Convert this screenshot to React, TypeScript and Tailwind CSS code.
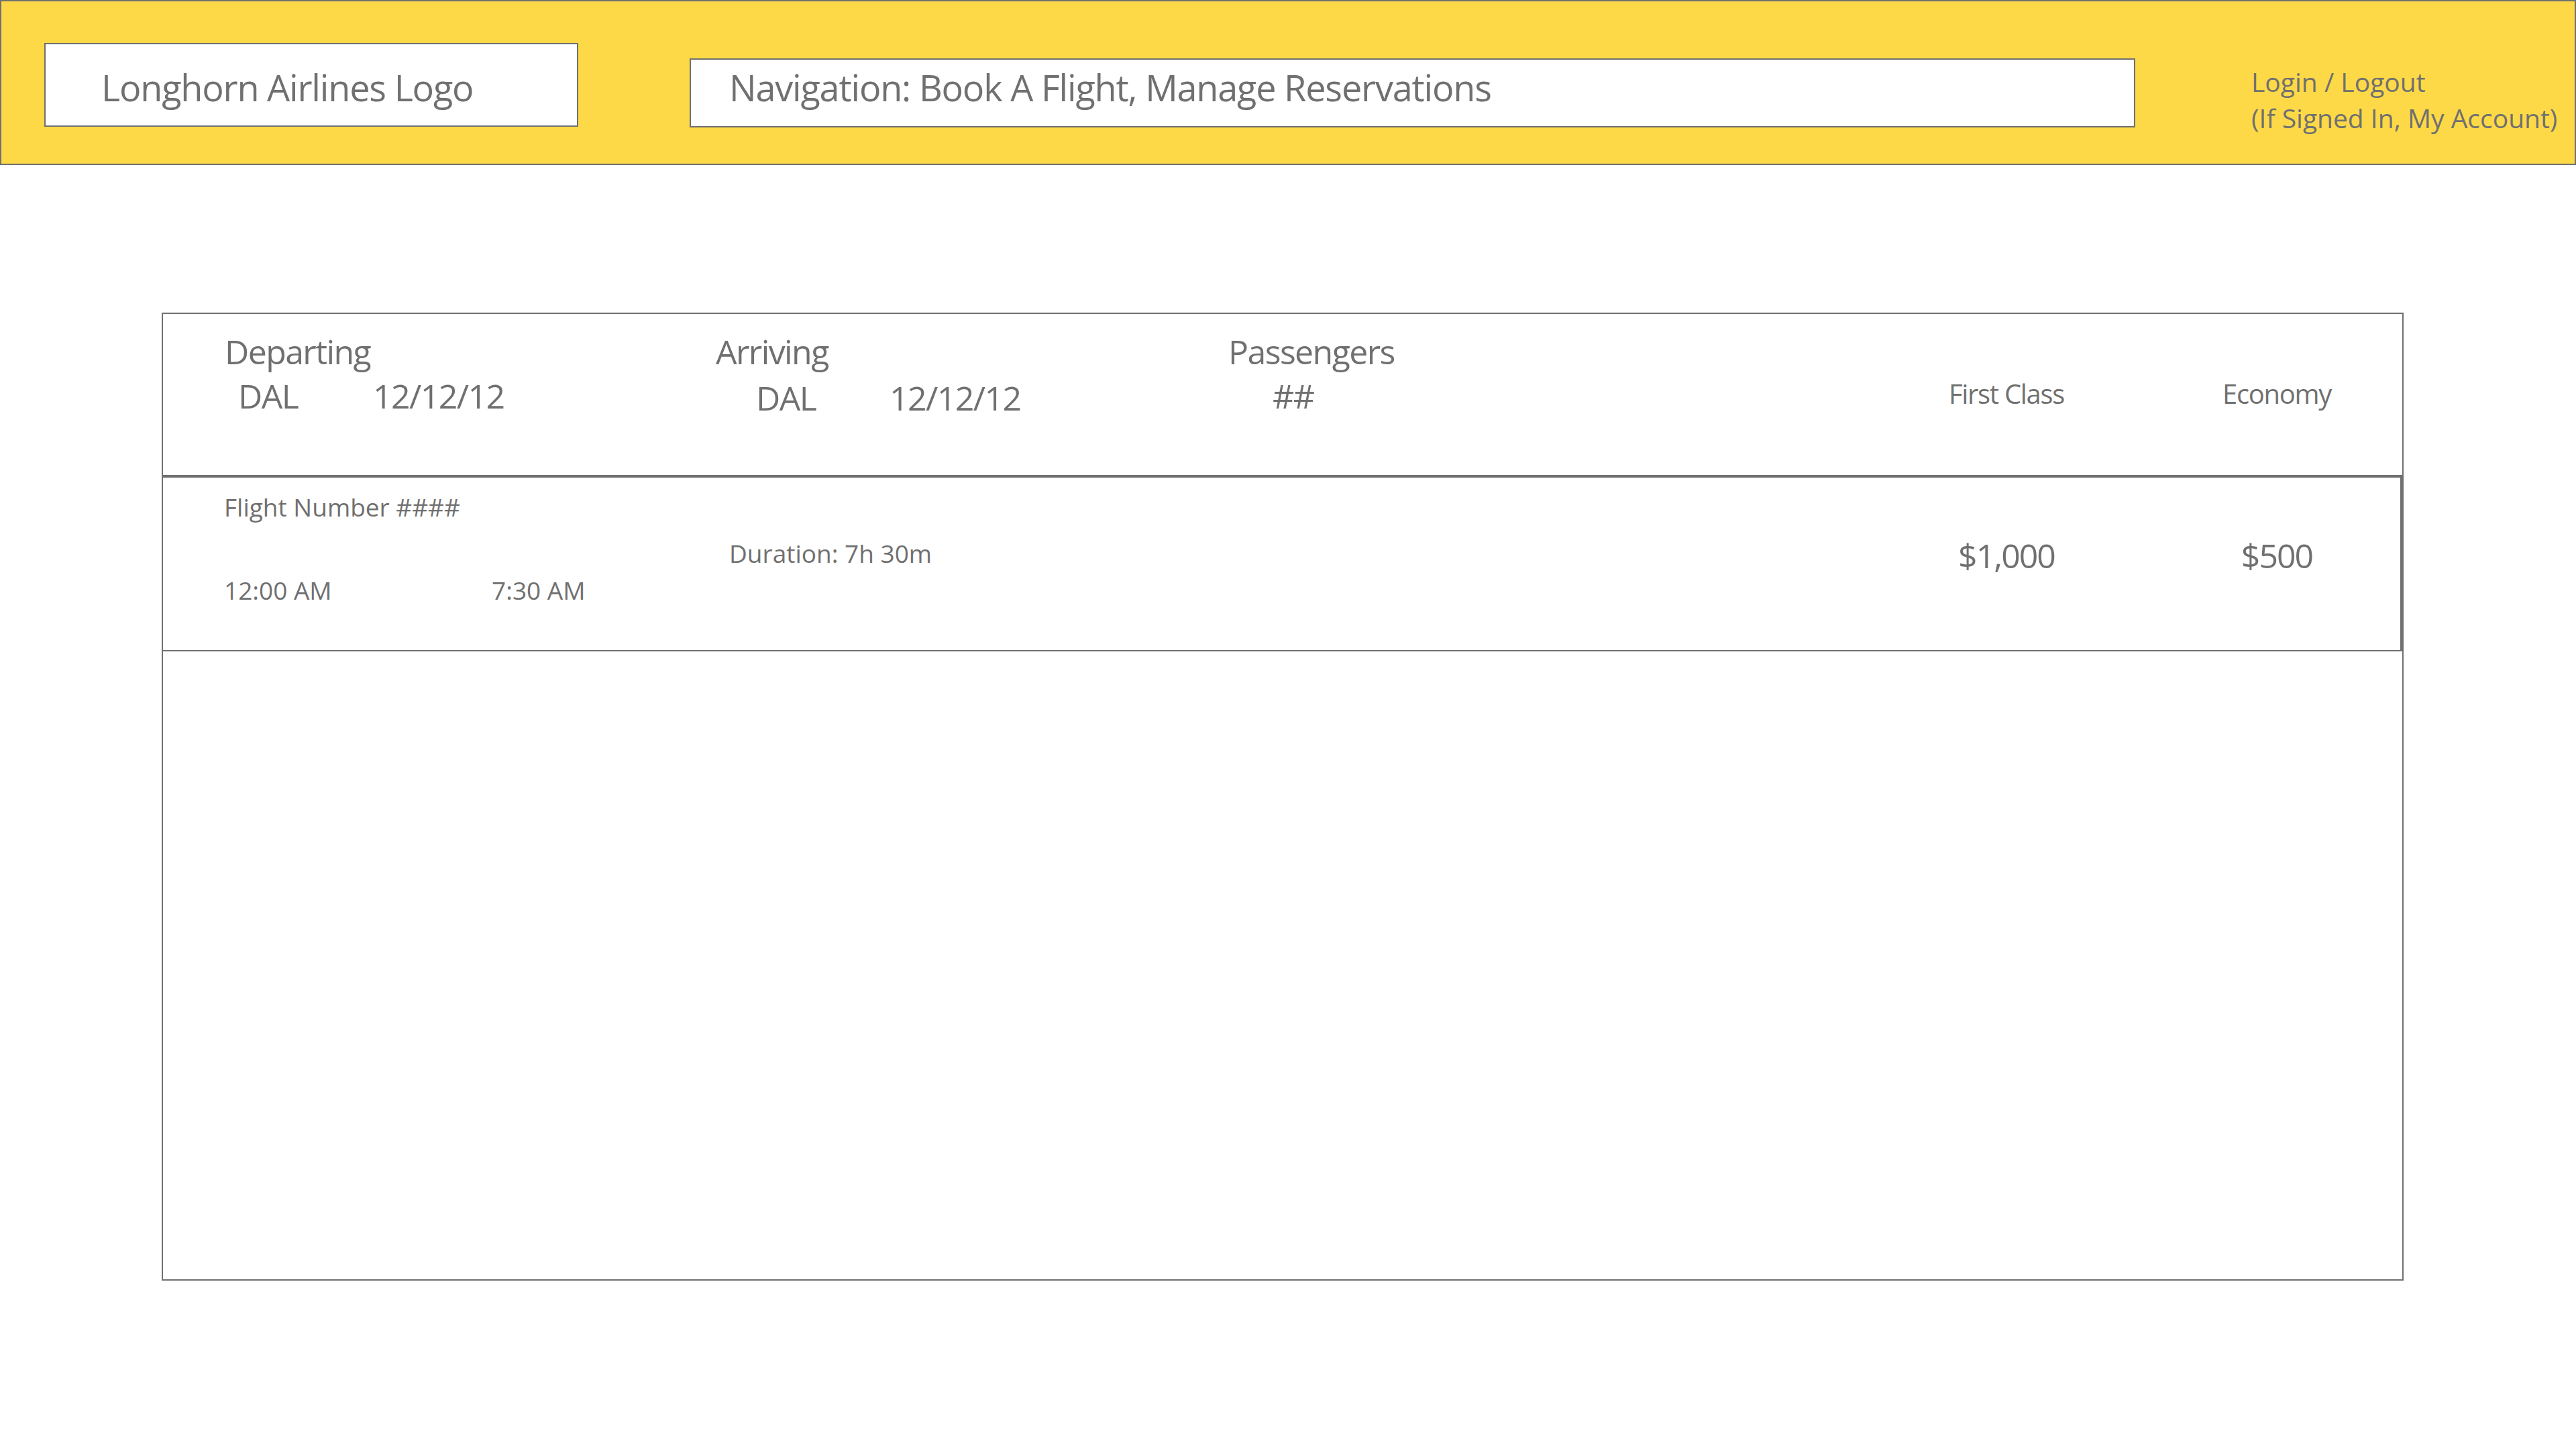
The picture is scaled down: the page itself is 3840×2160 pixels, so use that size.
export default function App() {
  return (
    <div className="w-[3840px] h-[2160px] bg-white text-[#707070] font-['Open_Sans',sans-serif] overflow-hidden">
      <header className="h-[246px] border-2 border-[#707070] bg-[#FDD947] flex items-start">
        <div className="ml-[64px] mt-[62px] w-[796px] h-[125px] border-2 border-[#707070] bg-white pl-[83px] pt-[37px] text-[54px] tracking-[-1.2px] leading-none whitespace-nowrap">
          Longhorn Airlines Logo
        </div>
        <nav className="ml-[166px] mt-[85px] w-[2155px] h-[103px] border-2 border-[#707070] bg-white pl-[57px] pt-[14px] text-[54px] tracking-[-1.2px] leading-none whitespace-nowrap">
          Navigation: Book A Flight, Manage Reservations
        </nav>
        <div className="ml-[173px] mt-[93px] text-[39px] leading-[54px] whitespace-nowrap">
          <div>Login / Logout</div>
          <div>(If Signed In, My Account)</div>
        </div>
      </header>

      <main className="mt-[220px] ml-[241px] w-[3342px] h-[1443px] border-2 border-[#707070]">
        {/* search summary */}
        <div className="h-[240px] flex items-start pl-[92px] pt-[31px] text-[50px] tracking-[-1.6px] leading-none whitespace-nowrap">
          <div className="w-[732px]">
            <div>Departing</div>
            <div className="mt-[16px] pl-[20px] flex">
              <span className="w-[201px]">DAL</span>
              <span>12/12/12</span>
            </div>
          </div>
          <div className="w-[764px]">
            <div>Arriving</div>
            <div className="mt-[19px] pl-[60px] flex">
              <span className="w-[199px]">DAL</span>
              <span>12/12/12</span>
            </div>
          </div>
          <div>
            <div>Passengers</div>
            <div className="mt-[16px] pl-[66px]">##</div>
          </div>
          <div className="ml-auto mr-[37px] mt-[68px] flex gap-[103px] text-[40px] tracking-[-1.3px]">
            <div className="w-[300px] text-center">First Class</div>
            <div className="w-[300px] text-center">Economy</div>
          </div>
        </div>

        {/* flight result */}
        <div className="h-[263px] border-t-4 border-b-2 border-r-[3px] border-[#707070] flex items-start pl-[91px] whitespace-nowrap">
          <div className="w-[753px] pt-[25px] text-[37px] leading-none">
            <div>Flight Number ####</div>
            <div className="mt-[87px] flex">
              <span className="w-[399px]">12:00 AM</span>
              <span>7:30 AM</span>
            </div>
          </div>
          <div className="pt-[94px] text-[37px] leading-none">Duration: 7h 30m</div>
          <div className="ml-auto mr-[34px] pt-[91px] flex gap-[103px] text-[50px] tracking-[-2px] leading-none">
            <div className="w-[300px] text-center">$1,000</div>
            <div className="w-[300px] text-center">$500</div>
          </div>
        </div>
      </main>
    </div>
  );
}
